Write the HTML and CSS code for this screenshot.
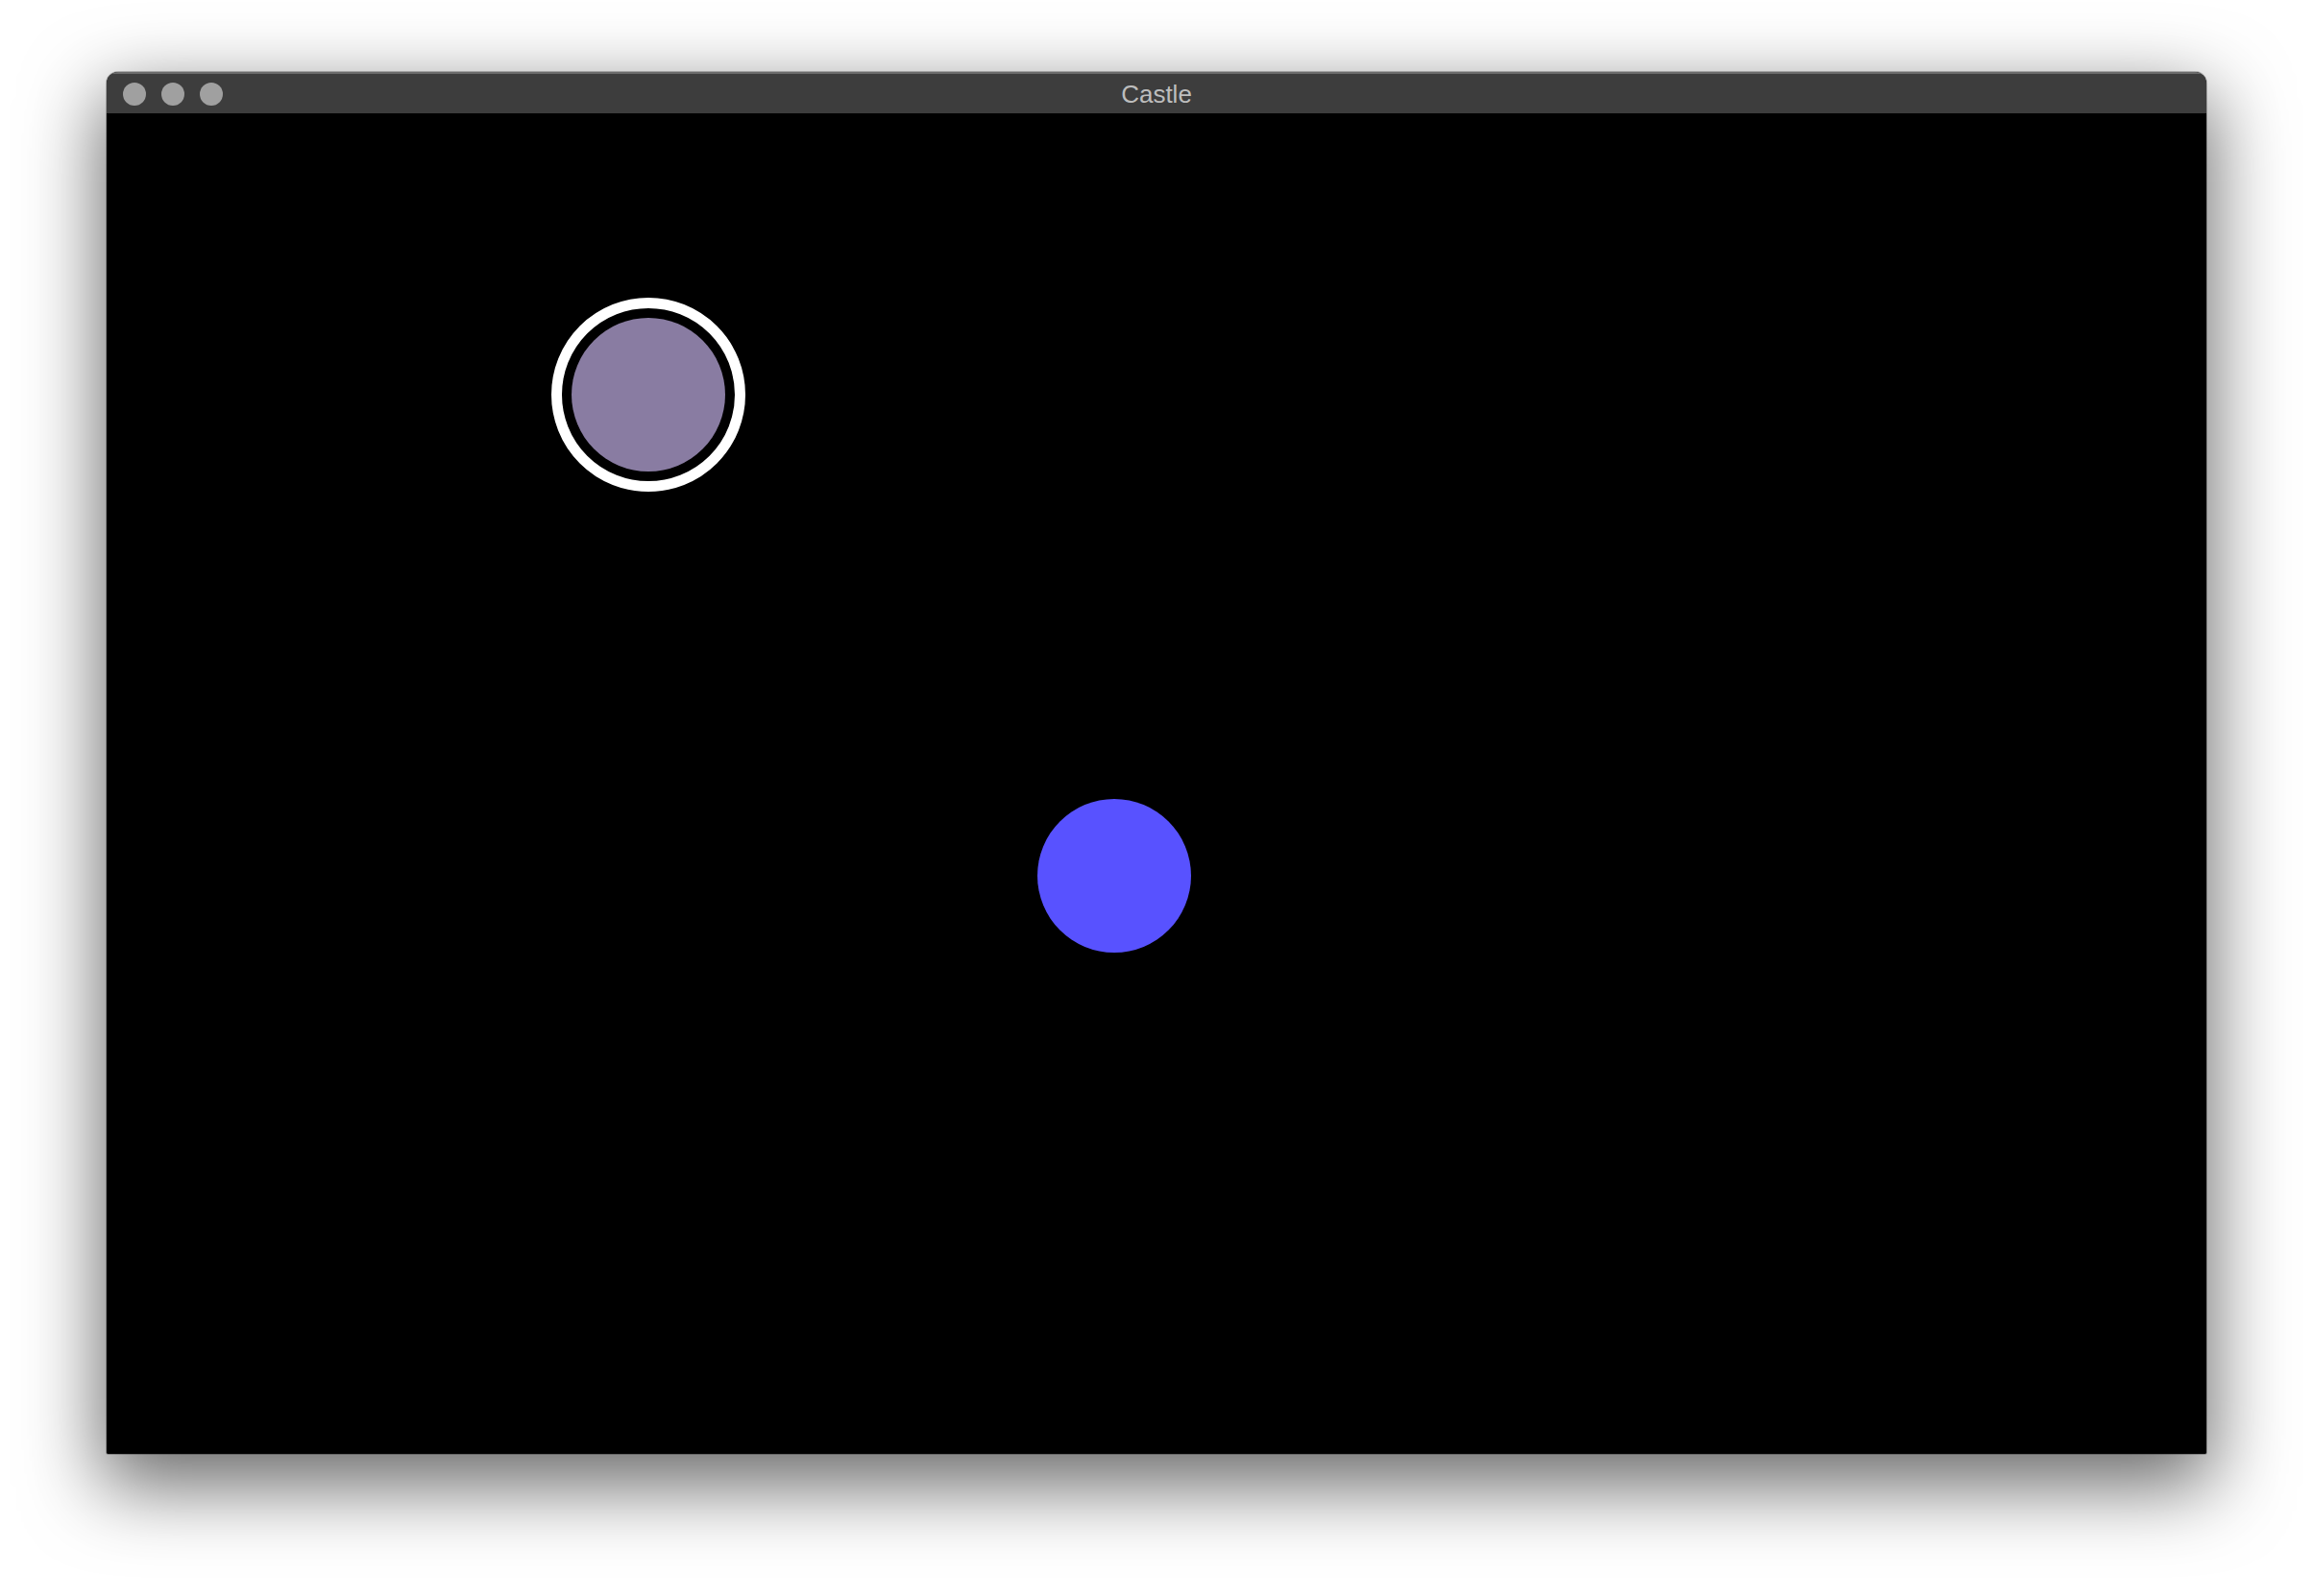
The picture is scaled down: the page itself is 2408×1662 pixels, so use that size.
FILE: index.html
```html
<!DOCTYPE html>
<html>
<head>
<meta charset="utf-8">
<title>Castle</title>
<link rel="stylesheet" href="styles.css">
</head>
<body>
<div class="stage">
  <div class="window">
    <div class="titlebar">
      <div class="lights">
        <span class="light"></span>
        <span class="light"></span>
        <span class="light"></span>
      </div>
      <div class="title">Castle</div>
    </div>
    <div class="canvas">
      <div class="token selected">
        <div class="token-fill"></div>
      </div>
      <div class="dot"></div>
    </div>
  </div>
</div>
</body>
</html>
```
FILE: styles.css
```css
html, body {
  margin: 0;
  padding: 0;
  background: #ffffff;
}
.stage {
  padding: 75px 0 0 111px;
  width: 2408px;
  height: 1662px;
  box-sizing: border-box;
  overflow: hidden;
}
.window {
  width: 2186px;
  height: 1439px;
  display: flex;
  flex-direction: column;
  border-radius: 12px 12px 2px 2px;
  overflow: hidden;
  box-shadow: 0 28px 80px 6px rgba(0,0,0,0.58), 0 0 0 1px rgba(0,0,0,0.25);
  background: #000;
}
.titlebar {
  position: relative;
  height: 43px;
  flex: none;
  background: #3d3d3d;
  border-top: 2px solid #6a6a6a;
  box-sizing: border-box;
  display: flex;
  align-items: center;
}
.lights {
  display: flex;
  gap: 16px;
  padding-left: 17px;
  margin-top: 1px;
}
.light {
  width: 24px;
  height: 24px;
  border-radius: 50%;
  background: #a0a0a0;
}
.title {
  position: absolute;
  left: 0;
  right: 0;
  top: 0;
  bottom: 0;
  display: flex;
  align-items: center;
  justify-content: center;
  font-family: "Liberation Sans", Arial, sans-serif;
  font-size: 26px;
  color: #bdbdbd;
  margin-top: 1px;
}
.canvas {
  position: relative;
  flex: 1;
  background: #000;
}
.token {
  position: absolute;
  left: 463px;
  top: 192px;
  width: 202px;
  height: 202px;
  box-sizing: border-box;
  border-radius: 50%;
  border: 11px solid #ffffff;
  padding: 10px;
  background: #000;
}
.token-fill {
  width: 160px;
  height: 160px;
  border-radius: 50%;
  background: #897ca2;
}
.dot {
  position: absolute;
  left: 969px;
  top: 714px;
  width: 160px;
  height: 160px;
  border-radius: 50%;
  background: #5852ff;
}
```
